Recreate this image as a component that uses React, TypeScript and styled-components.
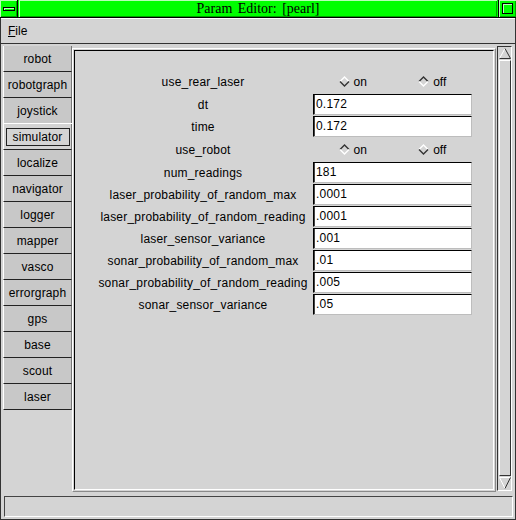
import React from "react";
import styled, { createGlobalStyle } from "styled-components";

const Global = createGlobalStyle`
  html, body { margin: 0; padding: 0; background: #d4d4d4; }
  body { font-family: "Liberation Sans", Arial, sans-serif; font-size: 12px; color: #000; }
  * { box-sizing: border-box; }
`;

const Window = styled.div`
  width: 516px;
  height: 520px;
  display: flex;
  flex-direction: column;
  background: #d4d4d4;
  overflow: hidden;
`;

const TitleBar = styled.div`
  height: 18px;
  flex: none;
  display: flex;
  background: #00ff00;
  border-bottom: 1px solid #000;
`;

const TitleButton = styled.div<{ $right?: boolean }>`
  width: 18px;
  flex: none;
  display: flex;
  align-items: center;
  justify-content: center;
  border-left: ${(p) => (p.$right ? "1px solid #000" : "none")};
  border-right: ${(p) => (p.$right ? "none" : "1px solid #000")};
  box-shadow: inset 1px 1px 0 #b8ffb8, inset -1px -1px 0 #00a000;
`;

const MinimizeGlyph = styled.div`
  width: 12px;
  height: 4px;
  border: 1px solid #000;
  background: #00ff00;
  box-shadow: inset 1px 1px 0 #b8ffb8;
`;

const MaximizeGlyph = styled.div`
  width: 11px;
  height: 11px;
  border: 1px solid #000;
  box-shadow: inset 1px 1px 0 #b8ffb8;
`;

const TitleText = styled.div`
  flex: 1;
  margin: 0 1px;
  text-align: center;
  font-family: "Liberation Serif", "Times New Roman", serif;
  font-size: 14px;
  line-height: 17px;
  word-spacing: 2px;
  box-shadow: inset 1px 1px 0 #b8ffb8, inset -1px -1px 0 #00a000;
`;

const Frame = styled.div`
  flex: 1;
  display: flex;
  flex-direction: column;
  border: 1px solid #333;
  border-top: none;
  min-height: 0;
`;

const MenuBar = styled.div`
  height: 26px;
  flex: none;
  display: flex;
  align-items: center;
  padding-left: 7px;
  border-top: 1px solid #fff;
  border-bottom: 1px solid #333;
`;

const MenuItem = styled.span`
  font-size: 12px;
`;

const Mnemonic = styled.span`
  text-decoration: underline;
`;

const Body = styled.div`
  flex: 1;
  display: flex;
  padding-right: 3px;
  min-height: 0;
`;

const Sidebar = styled.div`
  width: 71px;
  flex: none;
  display: flex;
  flex-direction: column;
  padding: 2px 0 0 2px;
`;

const ModuleButton = styled.div<{ $selected?: boolean }>`
  width: 69px;
  height: 26px;
  flex: none;
  display: flex;
  align-items: center;
  justify-content: center;
  background: ${(p) => (p.$selected ? "#d4d4d4" : "#c8c8c8")};
  border-left: 1px solid #fff;
  border-right: 1px solid #777;
  border-bottom: 1px solid #222;
  box-shadow: ${(p) => (p.$selected ? "0 -1px 0 #fff" : "none")};
  white-space: nowrap;
  letter-spacing: 0.15px;
`;

const FocusBox = styled.div`
  width: 64px;
  height: 18px;
  border: 1px solid #222;
  display: flex;
  align-items: center;
  justify-content: center;
`;

const Main = styled.div`
  flex: 1;
  display: flex;
  margin: 4px 0 1px 0;
  border: 1px solid;
  border-color: #fff #8a8a8a #8a8a8a #fff;
  padding: 1px;
`;

const Viewport = styled.div`
  flex: 1;
  border: 1px solid;
  border-color: #000 #fff #fff #000;
  padding-top: 18px;
  display: flex;
  flex-direction: column;
  align-items: center;
`;

const Row = styled.div<{ $tall?: boolean }>`
  display: grid;
  grid-template-columns: 214px 159px;
  column-gap: 3px;
  align-items: center;
  height: ${(p) => (p.$tall ? "24px" : "22px")};
`;

const Label = styled.div`
  text-align: center;
  white-space: nowrap;
  letter-spacing: 0.2px;
  padding-top: 1px;
`;

const Field = styled.input`
  width: 159px;
  height: 21px;
  margin: 0;
  padding: 0 2px;
  border: 1px solid;
  border-color: #000 #bdbdbd #bdbdbd #000;
  box-shadow: inset 1px 0 0 #444;
  background: #fff;
  font-family: "Liberation Sans", Arial, sans-serif;
  font-size: 12px;
  letter-spacing: 0.2px;
  color: #000;
  outline: none;
`;

const RadioGroup = styled.div`
  display: flex;
  padding-top: 1px;
`;

const RadioOption = styled.div`
  flex: 1;
  display: flex;
  align-items: center;
  justify-content: center;
  gap: 4px;
`;

const Scrollbar = styled.div`
  width: 15px;
  flex: none;
  margin: 2px 0 2px 1px;
  border: 1px solid;
  border-color: #333 #fff #fff #333;
  padding: 1px 0 1px 1px;
  display: flex;
  flex-direction: column;
  gap: 1px;
`;

const Thumb = styled.div`
  flex: 1;
  border: 1px solid;
  border-color: #fff #333 #333 #fff;
  background: #d4d4d4;
`;

const StatusArea = styled.div`
  height: 26px;
  flex: none;
  padding: 3px 2px 2px 3px;
`;

const StatusBox = styled.div`
  height: 21px;
  border: 1px solid;
  border-color: #444 #fff #fff #444;
`;

const Diamond = ({ set }: { set: boolean }) => {
  const top = set ? "#333" : "#fff";
  const bottom = set ? "#fff" : "#333";
  return (
    <svg width="11" height="11" viewBox="0 0 11 11">
      <polygon points="5.5,1 10,5.5 5.5,10 1,5.5" fill="#d4d4d4" />
      <polyline points="1,5.5 5.5,1 10,5.5" fill="none" stroke={top} strokeWidth="1.4" />
      <polyline points="1,5.5 5.5,10 10,5.5" fill="none" stroke={bottom} strokeWidth="1.4" />
    </svg>
  );
};

const UpArrow = () => (
  <svg width="12" height="11" viewBox="0 0 12 11">
    <polygon points="6,0.5 11.5,10.5 0.5,10.5" fill="#d4d4d4" />
    <polyline points="0.5,10.5 6,0.5" fill="none" stroke="#fff" strokeWidth="1" />
    <polyline points="6,0.5 11.5,10.5 0.5,10.5" fill="none" stroke="#333" strokeWidth="1" />
  </svg>
);

const DownArrow = () => (
  <svg width="12" height="12" viewBox="0 0 12 12">
    <polygon points="0.5,0.5 11.5,0.5 6,11.5" fill="#d4d4d4" />
    <polyline points="6,11.5 0.5,0.5 11.5,0.5" fill="none" stroke="#fff" strokeWidth="1" />
    <polyline points="11.5,0.5 6,11.5" fill="none" stroke="#333" strokeWidth="1" />
  </svg>
);

const modules = [
  "robot",
  "robotgraph",
  "joystick",
  "simulator",
  "localize",
  "navigator",
  "logger",
  "mapper",
  "vasco",
  "errorgraph",
  "gps",
  "base",
  "scout",
  "laser",
];

type Param =
  | { name: string; kind: "text"; value: string }
  | { name: string; kind: "bool"; on: boolean };

const params: Param[] = [
  { name: "use_rear_laser", kind: "bool", on: false },
  { name: "dt", kind: "text", value: "0.172" },
  { name: "time", kind: "text", value: "0.172" },
  { name: "use_robot", kind: "bool", on: true },
  { name: "num_readings", kind: "text", value: "181" },
  { name: "laser_probability_of_random_max", kind: "text", value: ".0001" },
  { name: "laser_probability_of_random_reading", kind: "text", value: ".0001" },
  { name: "laser_sensor_variance", kind: "text", value: ".001" },
  { name: "sonar_probability_of_random_max", kind: "text", value: ".01" },
  { name: "sonar_probability_of_random_reading", kind: "text", value: ".005" },
  { name: "sonar_sensor_variance", kind: "text", value: ".05" },
];

export default function App() {
  return (
    <>
      <Global />
      <Window>
        <TitleBar>
          <TitleButton>
            <MinimizeGlyph />
          </TitleButton>
          <TitleText>Param Editor: [pearl]</TitleText>
          <TitleButton $right>
            <MaximizeGlyph />
          </TitleButton>
        </TitleBar>
        <Frame>
          <MenuBar>
            <MenuItem>
              <Mnemonic>F</Mnemonic>ile
            </MenuItem>
          </MenuBar>
          <Body>
            <Sidebar>
              {modules.map((m) =>
                m === "simulator" ? (
                  <ModuleButton key={m} $selected>
                    <FocusBox>{m}</FocusBox>
                  </ModuleButton>
                ) : (
                  <ModuleButton key={m}>{m}</ModuleButton>
                )
              )}
            </Sidebar>
            <Main>
              <Viewport>
                {params.map((p) =>
                  p.kind === "bool" ? (
                    <Row key={p.name} $tall>
                      <Label>{p.name}</Label>
                      <RadioGroup>
                        <RadioOption>
                          <Diamond set={p.on} />
                          on
                        </RadioOption>
                        <RadioOption>
                          <Diamond set={!p.on} />
                          off
                        </RadioOption>
                      </RadioGroup>
                    </Row>
                  ) : (
                    <Row key={p.name}>
                      <Label>{p.name}</Label>
                      <Field defaultValue={p.value} readOnly />
                    </Row>
                  )
                )}
              </Viewport>
            </Main>
            <Scrollbar>
              <UpArrow />
              <Thumb />
              <DownArrow />
            </Scrollbar>
          </Body>
          <StatusArea>
            <StatusBox />
          </StatusArea>
        </Frame>
      </Window>
    </>
  );
}
